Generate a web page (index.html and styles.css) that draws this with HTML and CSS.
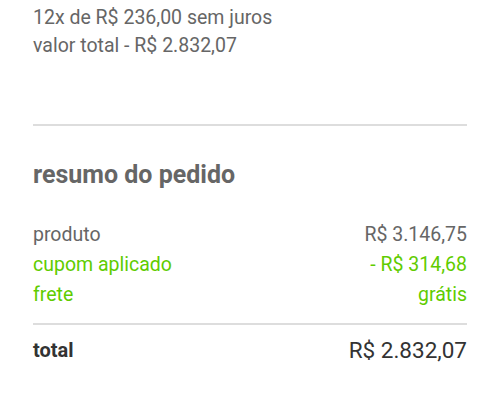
FILE: index.html
```html
<!DOCTYPE html>
<html lang="pt-BR">
<head>
<meta charset="utf-8">
<link rel="stylesheet" href="styles.css">
</head>
<body>
<div class="page">
  <div class="installments">
    <p class="line">12x de R$ 236,00 sem juros</p>
    <p class="line">valor total - R$ 2.832,07</p>
  </div>
  <hr class="divider top-divider">
  <h2 class="title">resumo do pedido</h2>
  <div class="rows">
    <div class="row"><span>produto</span><span>R$ 3.146,75</span></div>
    <div class="row green"><span>cupom aplicado</span><span>- R$ 314,68</span></div>
    <div class="row green"><span>frete</span><span>grátis</span></div>
  </div>
  <hr class="divider">
  <div class="total-row">
    <span class="total-label">total</span>
    <span class="total-value">R$ 2.832,07</span>
  </div>
</div>
</body>
</html>
```
FILE: styles.css
```css
html, body {
  margin: 0;
  padding: 0;
  background: #fff;
}
body {
  font-family: Roboto, "Liberation Sans", sans-serif;
  color: #666;
}
.page {
  padding: 4px 33px 0 33px;
}
.installments .line {
  margin: 0;
  font-size: 19.5px;
  line-height: 28px;
}
.divider {
  border: 0;
  height: 2px;
  background: #ddd;
  margin: 0;
}
.top-divider {
  margin-top: 64px;
}
.title {
  margin: 34px 0 0 0;
  font-size: 25px;
  line-height: 30px;
  font-weight: 700;
  color: #666;
}
.rows {
  margin-top: 30px;
  margin-bottom: 13px;
}
.row {
  display: flex;
  justify-content: space-between;
  font-size: 19.5px;
  line-height: 30px;
}
.green {
  color: #5fcc00;
}
.total-row {
  display: flex;
  justify-content: space-between;
  align-items: center;
  margin-top: 12px;
  color: #333;
}
.total-label {
  font-size: 20px;
  font-weight: 700;
}
.total-value {
  font-size: 22.5px;
}
```
